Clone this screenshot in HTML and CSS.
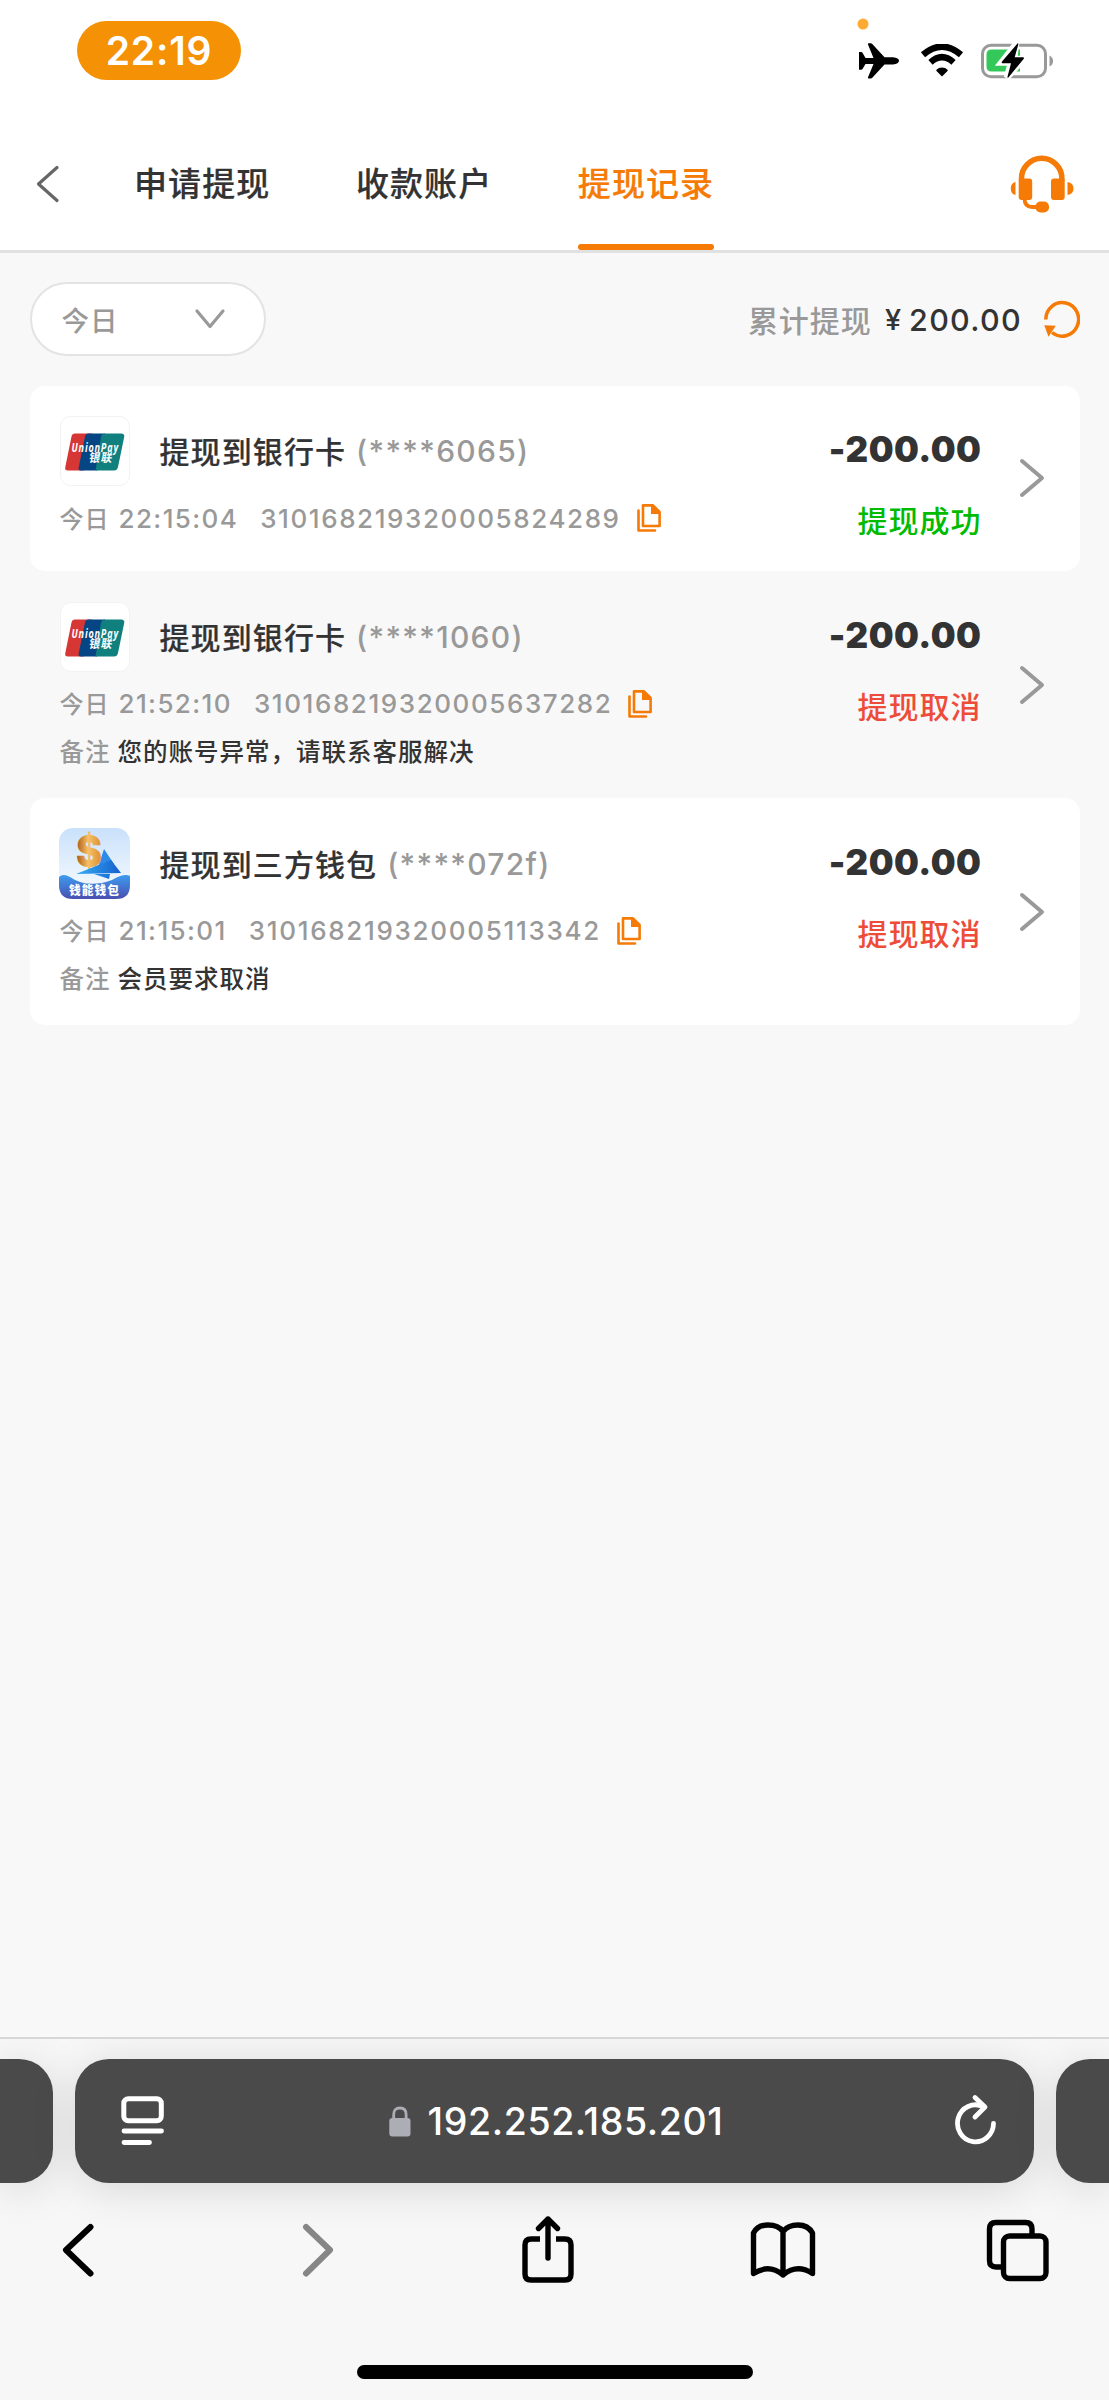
FILE: index.html
```html
<!DOCTYPE html>
<html lang="zh-CN">
<head>
<meta charset="utf-8">
<title>提现记录</title>
<link rel="stylesheet" href="styles.css">
</head>
<body>
<svg width="0" height="0" class="defs" aria-hidden="true">
  <defs>
    <linearGradient id="sky" x1="0" y1="0" x2="0" y2="1"><stop offset="0" stop-color="#c9e1fb"/><stop offset="1" stop-color="#fbfdff"/></linearGradient>
    <linearGradient id="wave" x1="0" y1="0" x2="0" y2="1"><stop offset="0" stop-color="#3c9cf0"/><stop offset="1" stop-color="#4a4fb0"/></linearGradient>
    <linearGradient id="sail" x1="0" y1="0" x2="1" y2="0"><stop offset="0" stop-color="#35aef5"/><stop offset="1" stop-color="#1660cc"/></linearGradient>
    <linearGradient id="gold" x1="0" y1="0" x2="1" y2="0"><stop offset="0" stop-color="#a8540f"/><stop offset=".45" stop-color="#f6c067"/><stop offset="1" stop-color="#d98a24"/></linearGradient>
    <symbol id="chev" viewBox="0 0 26 40"><path d="M3 3 23 20 3 37" fill="none" stroke="#999" stroke-width="4" stroke-linecap="round" stroke-linejoin="round"/></symbol>
    <symbol id="copy" viewBox="0 0 24 28"><path d="M1.500 6.500V26.500H18" fill="none" stroke="#f57a06" stroke-width="2.600" stroke-linejoin="round" stroke-linecap="round"/><path d="M6 1.400H16L22.600 8V22H6Z" fill="none" stroke="#f57a06" stroke-width="2.600" stroke-linejoin="round"/><path d="M14 1.500H16.500L22.600 8V10H14Z" fill="#f57a06"/></symbol>
    <symbol id="unionpay" viewBox="0 0 70 70">
      <rect x=".5" y=".5" width="69" height="69" rx="10" fill="#fff" stroke="#f2f2f2"/>
      <path d="M15 17.500H32L24 54.500H8Q4.500 54.500 5.300 51L11.500 20.500Q12.200 17.500 15 17.500Z" fill="#d63734"/>
      <path d="M28.500 17.500H45L37 54.500H20.500Q18 54.500 18.700 51.500L25 20.500Q25.700 17.500 28.500 17.500Z" fill="#054584"/>
      <path d="M44.500 17.500H61Q65 17.500 64.200 21L58 51Q57.200 54.500 54 54.500H35.500L41 21Q41.800 17.500 44.500 17.500Z" fill="#10807f"/>
      <text x="11.500" y="36" class="up-en" textLength="47.500" lengthAdjust="spacingAndGlyphs">UnionPay</text>
      <text x="28.500" y="46.500" class="up-cn" textLength="24" lengthAdjust="spacingAndGlyphs" transform="translate(8.300 0) skewX(-10)">银联</text>
    </symbol>
  </defs>
</svg>
<main class="screen">
  <header class="top">
    <div class="status-bar">
      <div class="clock">22:19</div>
      <div class="indicators">
        <div class="plane">
          <svg class="dot" width="12" height="12"><circle cx="6" cy="6" r="5.500" fill="#ffab33"/></svg>
          <svg width="40" height="36" viewBox="0 0 40 36"><path d="M0 9H2.200Q3 9 3.500 9.800L6.500 15H14.500L9 1.500Q8.600.3 9.800.3H11.800Q12.600.3 13.300 1L25.500 14.300H34Q40 14.800 40 17.800T34 21.500H25.500L13.300 34.700Q12.600 35.500 11.800 35.500H9.800Q8.600 35.500 9 34.300L14.500 21H6.500L3.500 25.900Q3 26.700 2.200 26.700H0Z"/></svg>
        </div>
        <svg width="44" height="34" viewBox="0 0 44 34"><path d="M22 23.500Q25.500 23.500 27.500 25.700Q28 26.300 27.500 26.900L22 32.500 16.500 26.900Q16 26.300 16.500 25.700 18.500 23.500 22 23.500Z"/><path d="M10.500 18.300Q22 8 33.500 18.300M3 10.800Q22-5.500 41 10.800" fill="none" stroke="#000" stroke-width="6.400"/></svg>
        <svg class="battery" width="74" height="38" viewBox="0 0 74 38"><rect x="2.500" y="3.200" width="63" height="31.500" rx="8.500" fill="none" stroke="#999" stroke-width="3"/><path d="M69.500 13.500Q73 15 73 19T69.500 24.500Z" fill="#999"/><path d="M11.500 7.500H40V29.500H11.500Q6.500 29.500 6.500 24.500V12.500Q6.500 7.500 11.500 7.500Z" fill="#34c85a"/><path d="M36 2 21.500 20.500H31L27 35.500 43.500 17H34Z" fill="#fff" stroke="#fff" stroke-width="6.500"/><path d="M37.500 1.500Q38.500.8 38.300 2.500L34.700 15.300H43Q44.600 15.500 43.600 16.900L28.400 35.500Q27.200 36.300 27.500 34.800L31 21.200H22.600Q21.200 21 22 19.600Z"/></svg>
      </div>
    </div>
    <nav class="nav">
      <svg class="back" width="24" height="38" viewBox="0 0 24 38"><path d="M21 2.500 2.500 19 21 35.500" fill="none" stroke="#666" stroke-width="3.200" stroke-linecap="round" stroke-linejoin="round"/></svg>
      <div class="tabs">
        <a class="tab">申请提现</a>
        <a class="tab">收款账户</a>
        <a class="tab active">提现记录</a>
      </div>
      <svg class="service" width="64" height="58" viewBox="0 0 64 58" fill="#f57a06"><path d="M11.500 26V23.500A20.200 20.200 0 0 1 51.900 23.500V26" fill="none" stroke="#f57a06" stroke-width="5.500"/><rect x="8.700" y="23.500" width="13.500" height="21.500" rx="3"/><rect x="41" y="23.500" width="13.700" height="21.500" rx="3"/><path d="M5.500 27V40Q.8 39 .8 33.500T5.500 27ZM57.500 27V40Q63.500 39 63.500 33.500T57.500 27Z"/><path d="M14.500 43Q14.500 52 22 52H28" fill="none" stroke="#f57a06" stroke-width="3.800"/><rect x="25.500" y="46.500" width="13.500" height="11" rx="5"/></svg>
    </nav>
  </header>

  <section class="summary">
    <div class="filter"><span>今日</span><svg width="32" height="22" viewBox="0 0 32 22"><path d="M3 3 16 18.500 29 3" fill="none" stroke="#999" stroke-width="3.200" stroke-linecap="round" stroke-linejoin="round"/></svg></div>
    <div class="total"><span class="total-label">累计提现</span><span class="yen">¥</span><span class="total-value">200.00</span>
      <svg width="36" height="38" viewBox="0 0 36 38"><path d="M1.800 19.500A16.400 16.800 0 1 1 8 32.500" fill="none" stroke="#f57a06" stroke-width="3.500"/><path d="M.3 25.300 11.800 25.700 4.500 36.700Z" fill="#f57a06"/></svg></div>
  </section>

  <ul class="records">
    <li class="record card">
      <div class="info">
        <div class="title"><svg class="logo" width="70" height="70"><use href="#unionpay"/></svg><span class="name">提现到银行卡</span><span class="tail">(****6065)</span></div>
        <div class="meta"><span class="day">今日</span><span class="time">22:15:04</span><span class="serial">310168219320005824289</span><svg width="24" height="28"><use href="#copy"/></svg></div>
      </div>
      <div class="result"><span class="amount">-200.00</span><span class="state ok">提现成功</span></div>
      <svg class="more" width="26" height="40"><use href="#chev"/></svg>
    </li>
    <li class="record">
      <div class="info">
        <div class="title"><svg class="logo" width="70" height="70"><use href="#unionpay"/></svg><span class="name">提现到银行卡</span><span class="tail">(****1060)</span></div>
        <div class="meta"><span class="day">今日</span><span class="time">21:52:10</span><span class="serial">310168219320005637282</span><svg width="24" height="28"><use href="#copy"/></svg></div>
        <div class="note"><span class="note-label">备注</span><span class="note-text">您的账号异常，请联系客服解决</span></div>
      </div>
      <div class="result"><span class="amount">-200.00</span><span class="state bad">提现取消</span></div>
      <svg class="more" width="26" height="40"><use href="#chev"/></svg>
    </li>
    <li class="record card">
      <div class="info">
        <div class="title"><svg class="logo wallet" width="71" height="71" viewBox="0 0 71 71">
          <rect width="71" height="71" rx="14" fill="url(#sky)"/>
          <path d="M0 49Q4 45 11 49 28 61 53 52 65 45 71 48V57Q71 71 57 71H14Q0 71 0 57Z" fill="url(#wave)"/>
          <path d="M45 21 55 36 38 42Z" fill="#2c8be8"/>
          <text x="17" y="39" class="coin" textLength="27" lengthAdjust="spacingAndGlyphs">$</text>
          <path d="M17 46 52 32 62 45ZM35 46H51L50 51Z" fill="url(#sail)"/>
          <text x="10" y="67" class="wallet-name" textLength="51" lengthAdjust="spacingAndGlyphs">钱能钱包</text>
        </svg><span class="name">提现到三方钱包</span><span class="tail">(****072f)</span></div>
        <div class="meta wide"><span class="day">今日</span><span class="time">21:15:01</span><span class="serial">310168219320005113342</span><svg width="24" height="28"><use href="#copy"/></svg></div>
        <div class="note"><span class="note-label">备注</span><span class="note-text">会员要求取消</span></div>
      </div>
      <div class="result"><span class="amount">-200.00</span><span class="state bad">提现取消</span></div>
      <svg class="more" width="26" height="40"><use href="#chev"/></svg>
    </li>
  </ul>

  <footer class="browser">
    <div class="pages">
      <div class="page prev"></div>
      <div class="page address">
        <svg width="44" height="50" viewBox="0 0 44 50" fill="none" stroke="#fff"><rect x="2.800" y="2.800" width="37.500" height="22" rx="4.500" stroke-width="5"/><path d="M3 35H40.500M3 46.500H28.500" stroke-width="4.800" stroke-linecap="round"/></svg>
        <div class="host"><svg width="22" height="31" viewBox="0 0 22 31"><rect x=".3" y="12" width="21.200" height="18.500" rx="3" fill="#adadb5"/><path d="M4.700 13V8.500Q4.700 2 10.900 2T17.100 8.500V13" fill="none" stroke="#adadb5" stroke-width="2.800"/></svg><span>192.252.185.201</span></div>
        <svg class="reload" width="42" height="51" viewBox="0 0 42 51" fill="none" stroke="#fff" stroke-width="4.800" stroke-linecap="round" stroke-linejoin="round"><path d="M28 12.500A18 18.500 0 1 0 38.500 29.500"/><path d="M20 3.500 30 13 20 23"/></svg>
      </div>
      <div class="page next"></div>
    </div>
    <div class="tools">
      <div class="tool"><svg width="32" height="54" viewBox="0 0 32 54"><path d="M28.500 4 4 27 28.500 50.500" fill="none" stroke="#000" stroke-width="6" stroke-linecap="round" stroke-linejoin="round"/></svg></div>
      <div class="tool forward"><svg width="32" height="54" viewBox="0 0 32 54"><path d="M4 4 28 27 4 50.500" fill="none" stroke="#868686" stroke-width="6" stroke-linecap="round" stroke-linejoin="round"/></svg></div>
      <div class="tool"><svg width="54" height="70" viewBox="0 0 54 70" fill="none" stroke="#000" stroke-width="5.400"><path d="M19 24H10Q4 24 4 30V59Q4 65 10 65H44Q50 65 50 59V30Q50 24 44 24H35"/><path d="M27 43V4M17.500 13.500 27 4 36.500 13.500" stroke-linecap="round" stroke-linejoin="round"/></svg></div>
      <div class="tool"><svg width="66" height="58" viewBox="0 0 66 58" fill="none" stroke="#000" stroke-width="5.400" stroke-linejoin="round" stroke-linecap="round"><path d="M33 10.500V54Q19 42.500 3.500 52.500V12Q7.500 4 18 4T33 10.500Q38 4 48 4T62.500 12V52.500Q47 42.500 33 54"/></svg></div>
      <div class="tool"><svg width="64" height="64" viewBox="0 0 64 64" fill="none" stroke="#000" stroke-width="5.400"><path d="M46 16V11Q46 4.500 39.500 4.500H10Q3.500 4.500 3.500 11V42.500Q3.500 49 10 49H15"/><rect x="17.500" y="18" width="42.500" height="42.500" rx="6"/></svg></div>
    </div>
    <div class="home-bar"></div>
  </footer>
</main>
</body>
</html>
```
FILE: styles.css
```css
* { box-sizing: border-box; }
body {
  margin: 0;
  background: #f8f8f8;
  color: #333;
  font-family: Inter, "Noto Sans CJK SC", sans-serif;
  font-weight: 500;
}
svg { display: block; flex: none; }
span { white-space: nowrap; flex: none; }
.defs { position: absolute; }
.screen { width: 1109px; height: 2400px; display: flex; flex-direction: column; overflow: hidden; }

.top { height: 253px; background: #fff; border-bottom: 3px solid #e1e1e1; display: flex; flex-direction: column; }
.status-bar { height: 118px; display: flex; justify-content: space-between; padding: 21px 55px 0 77px; }
.clock { width: 164px; height: 59px; border-radius: 30px; background: #f59104; color: #fff; font-size: 39px; font-weight: 600; letter-spacing: .8px; line-height: 60px; text-align: center; }
.indicators { display: flex; align-items: center; gap: 20.500px; height: 80px; }
.battery { margin-left: -4px; }
.plane { position: relative; }
.dot { position: absolute; left: -2px; top: -25px; }

.nav { height: 132px; display: flex; align-items: center; padding: 0 35px 0 36px; }
.tabs { display: flex; gap: 85.500px; margin-left: 74px; flex: 1; }
.tab { height: 132px; line-height: 132px; font-size: 33px; letter-spacing: 1.100px; border-bottom: 6px solid transparent; -webkit-text-stroke: .2px; }
.active { color: #f57a06; position: relative; }
.active::after { content: ""; position: absolute; left: 0; right: 0; bottom: -6px; height: 6px; border-radius: 3px; background: #f57a06; }

.summary { height: 132.500px; display: flex; align-items: center; justify-content: space-between; padding: 0 29.500px; }
.filter { width: 236.500px; height: 74px; border: 2.500px solid #e3e3e3; border-radius: 37px; background: #fff; display: flex; align-items: center; justify-content: space-between; padding: 0 38px 0 30px; font-size: 27.500px; letter-spacing: 1px; color: #999; }
.total { display: flex; align-items: center; font-size: 30.500px; letter-spacing: 1px; }
.total-label { font-size: 30px; color: #999; margin-right: 13px; }
.yen { font-size: 29px; margin-right: 7px; }
.total-value { margin-right: 21.500px; padding-top: 1px; letter-spacing: 1.300px; }

.records { list-style: none; margin: 0; padding: 0 29.500px; }
.record { display: flex; align-items: center; padding: 0 35px 0 30px; border-radius: 15px; }
.card { background: #fff; }
.info { flex: 1; padding: 30.500px 0; }
.title { height: 70px; display: flex; align-items: center; font-size: 30px; letter-spacing: 1.100px; }
.logo { margin-right: 30px; }
.wallet { margin: 0 30px 0 -1px; }
.name { margin-right: 10px; padding-bottom: 2px; -webkit-text-stroke: .2px; }
.tail { color: #999; letter-spacing: 1.300px; }
.meta { margin-top: 9.500px; height: 45px; display: flex; align-items: center; font-size: 26px; letter-spacing: 1px; color: #999; }
.day { font-size: 24px; margin-right: 9px; padding-bottom: 2px; }
.time { margin-right: 22px; letter-spacing: 1.400px; }
.serial { margin-right: 16px; letter-spacing: 1.580px; }
.wide .serial { letter-spacing: 1.700px; }
.note { height: 51px; margin-bottom: -9.500px; padding-bottom: 2px; display: flex; align-items: center; font-size: 24.500px; letter-spacing: 1px; }
.note-label { color: #999; margin-right: 7px; }
.result { align-self: flex-start; padding-top: 30.500px; display: flex; flex-direction: column; align-items: flex-end; letter-spacing: 1px; }
.amount { height: 68px; line-height: 67px; font-size: 35px; font-weight: 900; letter-spacing: .5px; }
.state { height: 76px; line-height: 75px; font-size: 30px; }
.ok { color: #0b0; }
.bad { color: #ee4c3a; }
.more { margin-left: 37px; }
.up-en { font: italic 700 12px "Open Sans", sans-serif; fill: #fff; }
.up-cn { font: 700 12px "Noto Sans CJK SC", sans-serif; fill: #fff; }
.coin { font: 900 44px Inter, sans-serif; fill: url(#gold); }
.wallet-name { font: 900 12px "Noto Sans CJK SC", sans-serif; fill: #fff; }

.browser { margin-top: auto; height: 363px; border-top: 2px solid #d7d7d7; background: #f7f7f7; display: flex; flex-direction: column; overflow: hidden; }
.pages { display: flex; gap: 22px; margin-top: 20px; height: 124px; }
.page { background: #4a4a4a; border-radius: 34px; box-shadow: 0 6px 44px rgba(0, 0, 0, .13); }
.prev { width: 53px; border-radius: 0 34px 34px 0; }
.next { width: 53px; border-radius: 34px 0 0 34px; }
.address { flex: 1; display: flex; align-items: center; justify-content: space-between; padding: 0 37px 0 46px; color: #fff; }
.host { display: flex; align-items: center; gap: 17px; margin-left: -8px; font-size: 37.500px; letter-spacing: .6px; }
.reload { margin-bottom: 4px; }
.tools { height: 133px; width: 1175px; margin-left: -40px; display: flex; align-items: center; }
.tool { width: 235px; flex: none; display: flex; justify-content: center; }
.forward { padding-left: 11px; }
.home-bar { width: 396px; height: 14px; border-radius: 7px; background: #000; margin: 49px auto 0; }
```
